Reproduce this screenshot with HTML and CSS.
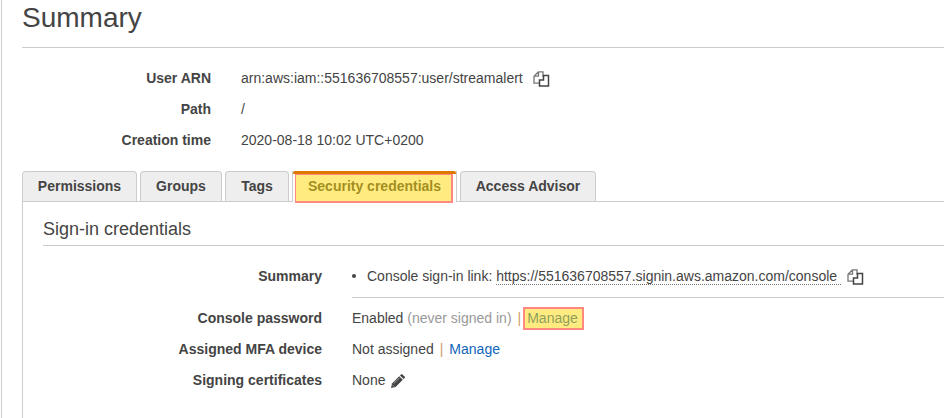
FILE: index.html
```html
<!DOCTYPE html>
<html lang="en">
<head>
<meta charset="utf-8">
<title>Summary</title>
<link rel="stylesheet" href="styles.css">
</head>
<body>
<svg class="sprite" aria-hidden="true">
  <symbol id="copy" viewBox="0 0 17 16">
    <path d="M5.500.8H10v5M5.500.8 1 5.200v7h5.500M5.500.8v4.400H1" fill="none" stroke="#777" stroke-width="1.3"/>
    <path d="M10.500 4.500h5v10.500h-9V9h4z" fill="#fff" stroke="#444" stroke-width="1.500"/>
  </symbol>
</svg>
<main class="page">
  <h1 class="title">Summary</h1>
  <dl class="details">
    <dt>User ARN</dt>
    <dd>arn:aws:iam::551636708557:user/streamalert<svg class="copy"><use href="#copy"/></svg></dd>
    <dt>Path</dt>
    <dd>/</dd>
    <dt>Creation time</dt>
    <dd>2020-08-18 10:02 UTC+0200</dd>
  </dl>
  <nav class="tabs">
    <a class="tab permissions">Permissions</a>
    <a class="tab groups">Groups</a>
    <a class="tab tags">Tags</a>
    <a class="tab security active">Security credentials</a>
    <a class="tab advisor">Access Advisor</a>
  </nav>
  <section class="panel">
    <h2 class="subtitle">Sign-in credentials</h2>
    <dl class="details credentials">
      <dt>Summary</dt>
      <dd class="summary"><span class="bullet"></span>Console sign-in link:&nbsp;<span class="url">https://551636708557.signin.aws.amazon.com/console</span><svg class="copy"><use href="#copy"/></svg></dd>
      <dt>Console password</dt>
      <dd>Enabled&nbsp;<span class="muted">(never signed in)</span><span class="bar">|</span><a class="link marked">Manage</a></dd>
      <dt>Assigned MFA device</dt>
      <dd>Not assigned<span class="bar">|</span><a class="link">Manage</a></dd>
      <dt>Signing certificates</dt>
      <dd>None<svg class="pencil" viewBox="0 0 14 14"><path d="M0 14 1 9.400 8.200 2.200l3.600 3.600L4.600 13z" fill="#444"/><path d="m9 1.400 1-1q.7-.6 1.400 0L13.600 2.600q.7.7 0 1.400l-1 1z" fill="#444"/><path d="m2.800 9.500 5.700-5.700M1.500 10.800l1.700 1.700" stroke="#bbb" stroke-width=".8"/></svg></dd>
    </dl>
  </section>
</main>
</body>
</html>
```
FILE: styles.css
```css
* { box-sizing: border-box; }
body {
  margin: 0;
  height: 418px;
  overflow: hidden;
  background: #fff;
  color: #444;
  font: 14px/20px "Liberation Sans", Arial, sans-serif;
}
.sprite { display: none; }
.page {
  height: 418px;
  margin-left: 1px;
  padding-left: 20px;
  border-left: 1px solid #ccc;
}
.title {
  height: 48px;
  margin: 0;
  padding-top: 1px;
  border-bottom: 1px solid #ccc;
  font-size: 28px;
  font-weight: 400;
  line-height: 34px;
}
.details {
  display: grid;
  grid-template-columns: 189px 1fr;
  grid-auto-rows: 31px;
  column-gap: 30px;
  margin: 0;
  padding-top: 15px;
}
.details dt {
  font-weight: 700;
  line-height: 31px;
  text-align: right;
}
.details dd {
  display: flex;
  align-items: center;
  margin: 0;
  padding-bottom: 2px;
  white-space: nowrap;
}
.copy { flex: none; width: 17px; height: 16px; margin: 2px 0 0 10px; }
.tabs {
  display: flex;
  gap: 3px;
  height: 31px;
  margin-top: 15px;
  border-bottom: 1px solid #ccc;
}
.tab {
  height: 30px;
  border: 1px solid #ccc;
  border-bottom: 0;
  border-radius: 4px 4px 0 0;
  background: #eee;
  font-weight: 700;
  line-height: 29px;
  text-align: center;
}
.permissions { width: 115px; }
.groups { width: 82px; }
.tags { width: 64px; }
.security { width: 165px; }
.advisor { width: 136px; }
.tab.active {
  position: relative;
  height: 31px;
  border-top: 0;
  border-radius: 0;
  background: #fff;
  line-height: 31px;
}
.active::before {
  content: "";
  position: absolute;
  top: 0;
  left: 0;
  width: 163px;
  height: 3px;
  border-radius: 2px 2px 0 0;
  background: #e07700;
}
.active::after, .marked::after {
  content: "";
  position: absolute;
  border: 2px solid #ff8880;
  background: rgba(255, 215, 0, .5);
  background-clip: padding-box;
}
.active::after { inset: 3px 3px -1px 2px; border-width: 1px 2px 2px 1px; }
.panel {
  height: 216px;
  padding-left: 20px;
  border-left: 1px solid #ccc;
}
.subtitle {
  height: 44px;
  margin: 0;
  border-bottom: 1px solid #ccc;
  font-size: 18px;
  font-weight: 400;
  line-height: 54px;
}
.credentials {
  grid-template-columns: 279px 1fr;
  grid-template-rows: 37px;
  padding-top: 15px;
}
.credentials .summary {
  height: 37px;
  padding-bottom: 7px;
  border-bottom: 1px solid #ccc;
}
.credentials .summary ~ dt,
.credentials .summary ~ dd { margin-top: 5px; margin-bottom: -5px; }
.bullet { width: 4px; height: 4px; margin-right: 11px; border-radius: 50%; background: #444; }
.url { height: 18px; padding-right: 4px; border-bottom: 1px dotted #777; line-height: 18px; }
.summary .copy { margin-left: 6px; }
.muted { color: #999; }
.bar { margin: 0 6px; color: #cf9a70; }
.link { position: relative; color: #1166bb; }
.marked::after { inset: -1px -6px -2px -4px; }
.pencil { width: 14px; height: 14px; margin: 2px 0 0 6px; }
```
